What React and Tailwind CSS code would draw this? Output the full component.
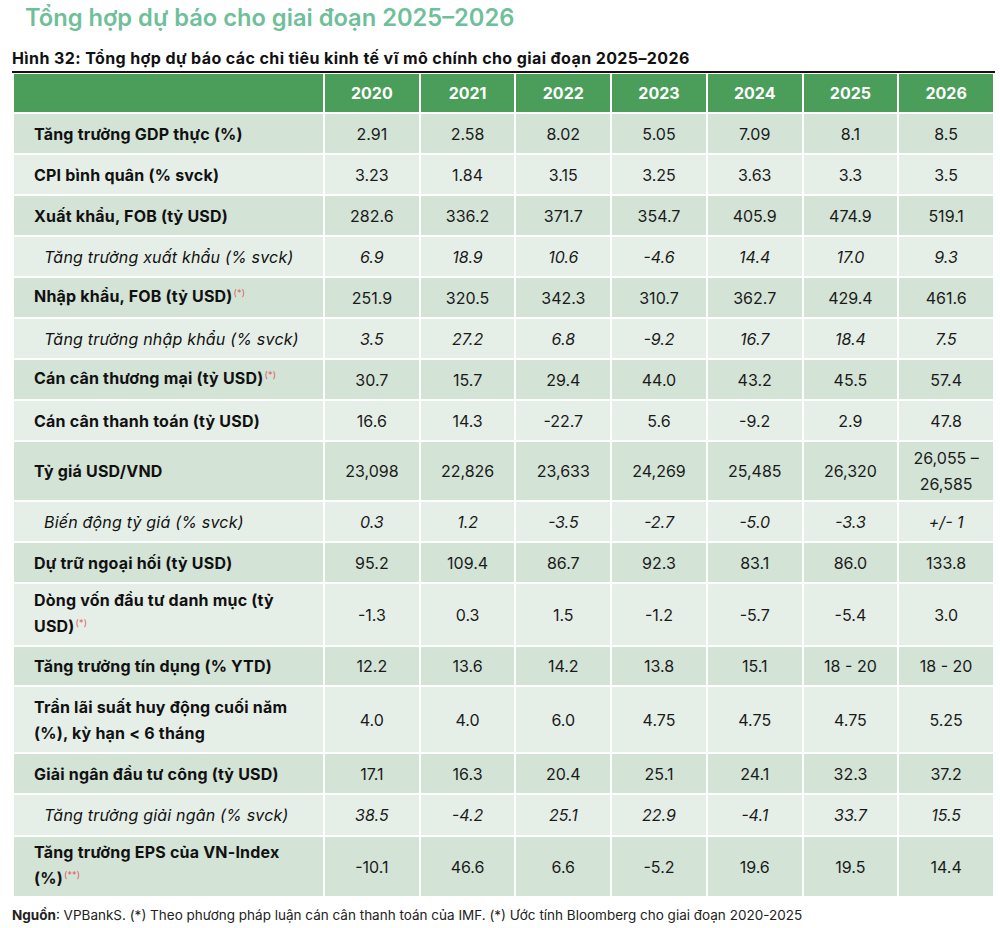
import React from "react";

const years = ["2020", "2021", "2022", "2023", "2024", "2025", "2026"];

// each row: label (string or array of lines), note superscript, italic sub-row, cell height
const rows = [
  { label: ["Tăng trưởng GDP thực (%)"], h: "h-[39px]", values: ["2.91", "2.58", "8.02", "5.05", "7.09", "8.1", "8.5"] },
  { label: ["CPI bình quân (% svck)"], h: "h-[39px]", values: ["3.23", "1.84", "3.15", "3.25", "3.63", "3.3", "3.5"] },
  { label: ["Xuất khẩu, FOB (tỷ USD)"], h: "h-[39px]", values: ["282.6", "336.2", "371.7", "354.7", "405.9", "474.9", "519.1"] },
  { label: ["Tăng trưởng xuất khẩu (% svck)"], italic: true, h: "h-[39px]", values: ["6.9", "18.9", "10.6", "-4.6", "14.4", "17.0", "9.3"] },
  { label: ["Nhập khẩu, FOB (tỷ USD)"], note: "(*)", h: "h-[39px]", values: ["251.9", "320.5", "342.3", "310.7", "362.7", "429.4", "461.6"] },
  { label: ["Tăng trưởng nhập khẩu (% svck)"], italic: true, h: "h-[39px]", values: ["3.5", "27.2", "6.8", "-9.2", "16.7", "18.4", "7.5"] },
  { label: ["Cán cân thương mại (tỷ USD)"], note: "(*)", h: "h-[39px]", values: ["30.7", "15.7", "29.4", "44.0", "43.2", "45.5", "57.4"] },
  { label: ["Cán cân thanh toán (tỷ USD)"], h: "h-[39px]", values: ["16.6", "14.3", "-22.7", "5.6", "-9.2", "2.9", "47.8"] },
  { label: ["Tỷ giá USD/VND"], h: "h-[58px]", values: ["23,098", "22,826", "23,633", "24,269", "25,485", "26,320", "26,055 –\n26,585"] },
  { label: ["Biến động tỷ giá (% svck)"], italic: true, h: "h-[39px]", values: ["0.3", "1.2", "-3.5", "-2.7", "-5.0", "-3.3", "+/- 1"] },
  { label: ["Dự trữ ngoại hối (tỷ USD)"], h: "h-[39px]", values: ["95.2", "109.4", "86.7", "92.3", "83.1", "86.0", "133.8"] },
  { label: ["Dòng vốn đầu tư danh mục (tỷ", "USD)"], note: "(*)", h: "h-[61px]", values: ["-1.3", "0.3", "1.5", "-1.2", "-5.7", "-5.4", "3.0"] },
  { label: ["Tăng trưởng tín dụng (% YTD)"], h: "h-[38px]", values: ["12.2", "13.6", "14.2", "13.8", "15.1", "18 - 20", "18 - 20"] },
  { label: ["Trần lãi suất huy động cuối năm", "(%), kỳ hạn < 6 tháng"], h: "h-[65px]", values: ["4.0", "4.0", "6.0", "4.75", "4.75", "4.75", "5.25"] },
  { label: ["Giải ngân đầu tư công (tỷ USD)"], h: "h-[39px]", values: ["17.1", "16.3", "20.4", "25.1", "24.1", "32.3", "37.2"] },
  { label: ["Tăng trưởng giải ngân (% svck)"], italic: true, h: "h-[40px]", values: ["38.5", "-4.2", "25.1", "22.9", "-4.1", "33.7", "15.5"] },
  { label: ["Tăng trưởng EPS của VN-Index", "(%)"], note: "(**)", h: "h-[59px]", values: ["-10.1", "46.6", "6.6", "-5.2", "19.6", "19.5", "14.4"] },
];

const Row = ({ row, dark }) => {
  const bg = dark ? "bg-[#d3e3d6]" : "bg-[#e6efe7]";
  const last = row.label.length - 1;
  return (
    <div className="grid grid-cols-[309px_repeat(7,1fr)] gap-x-[2px]">
      <div className={`${bg} ${row.h} flex flex-col justify-center ${row.italic ? "pl-[30px] italic font-normal" : "pl-[20px] font-bold"} text-[16px] leading-[26px] tracking-[0.2px] text-[#111]`}>
        {row.label.map((line, i) => (
          <div key={i} className="whitespace-nowrap">
            {line}
            {i === last && row.note && (
              <span className="relative -top-[6px] ml-[1px] text-[9px] font-normal not-italic text-[#e05a5a]">{row.note}</span>
            )}
          </div>
        ))}
      </div>
      {row.values.map((v, i) => (
        <div
          key={i}
          className={`${bg} ${row.h} flex items-center justify-center text-center text-[16px] leading-[26px] text-[#1a1a1a] whitespace-pre-line ${row.italic ? "italic" : ""}`}
        >
          {v}
        </div>
      ))}
    </div>
  );
};

export default function App() {
  return (
    <div className="w-[1000px] h-[928px] bg-white font-['Inter',sans-serif] overflow-hidden">
      <h1 className="pl-[25px] pt-[1px] text-[23.7px] leading-[34px] font-semibold text-[#6fbf9a]">
        Tổng hợp dự báo cho giai đoạn 2025–2026
      </h1>
      <h2 className="pl-[12px] mt-[13px] text-[16px] leading-[20px] font-bold tracking-[0.4px] text-[#111]">
        Hình 32: Tổng hợp dự báo các chỉ tiêu kinh tế vĩ mô chính cho giai đoạn 2025–2026
      </h2>
      <div className="ml-[12px] w-[983px] h-[2px] bg-[#111] mt-[3px]" />
      <div className="ml-[14px] w-[979px] mt-[1px] flex flex-col gap-y-[2px]">
        <div className="grid grid-cols-[309px_repeat(7,1fr)] gap-x-[2px]">
          <div className="bg-[#4a9e5a] h-[38px]" />
          {years.map((y) => (
            <div key={y} className="bg-[#4a9e5a] h-[38px] flex items-center justify-center text-white text-[16px] font-bold">
              {y}
            </div>
          ))}
        </div>
        {rows.map((row, i) => (
          <Row key={i} row={row} dark={i % 2 === 0} />
        ))}
      </div>
      <p className="pl-[12px] mt-[9px] text-[13.5px] leading-[20px] text-[#222]">
        <span className="font-bold">Nguồn</span>: VPBankS. (*) Theo phương pháp luận cán cân thanh toán của IMF. (*) Ước tính Bloomberg cho giai đoạn 2020-2025
      </p>
    </div>
  );
}
